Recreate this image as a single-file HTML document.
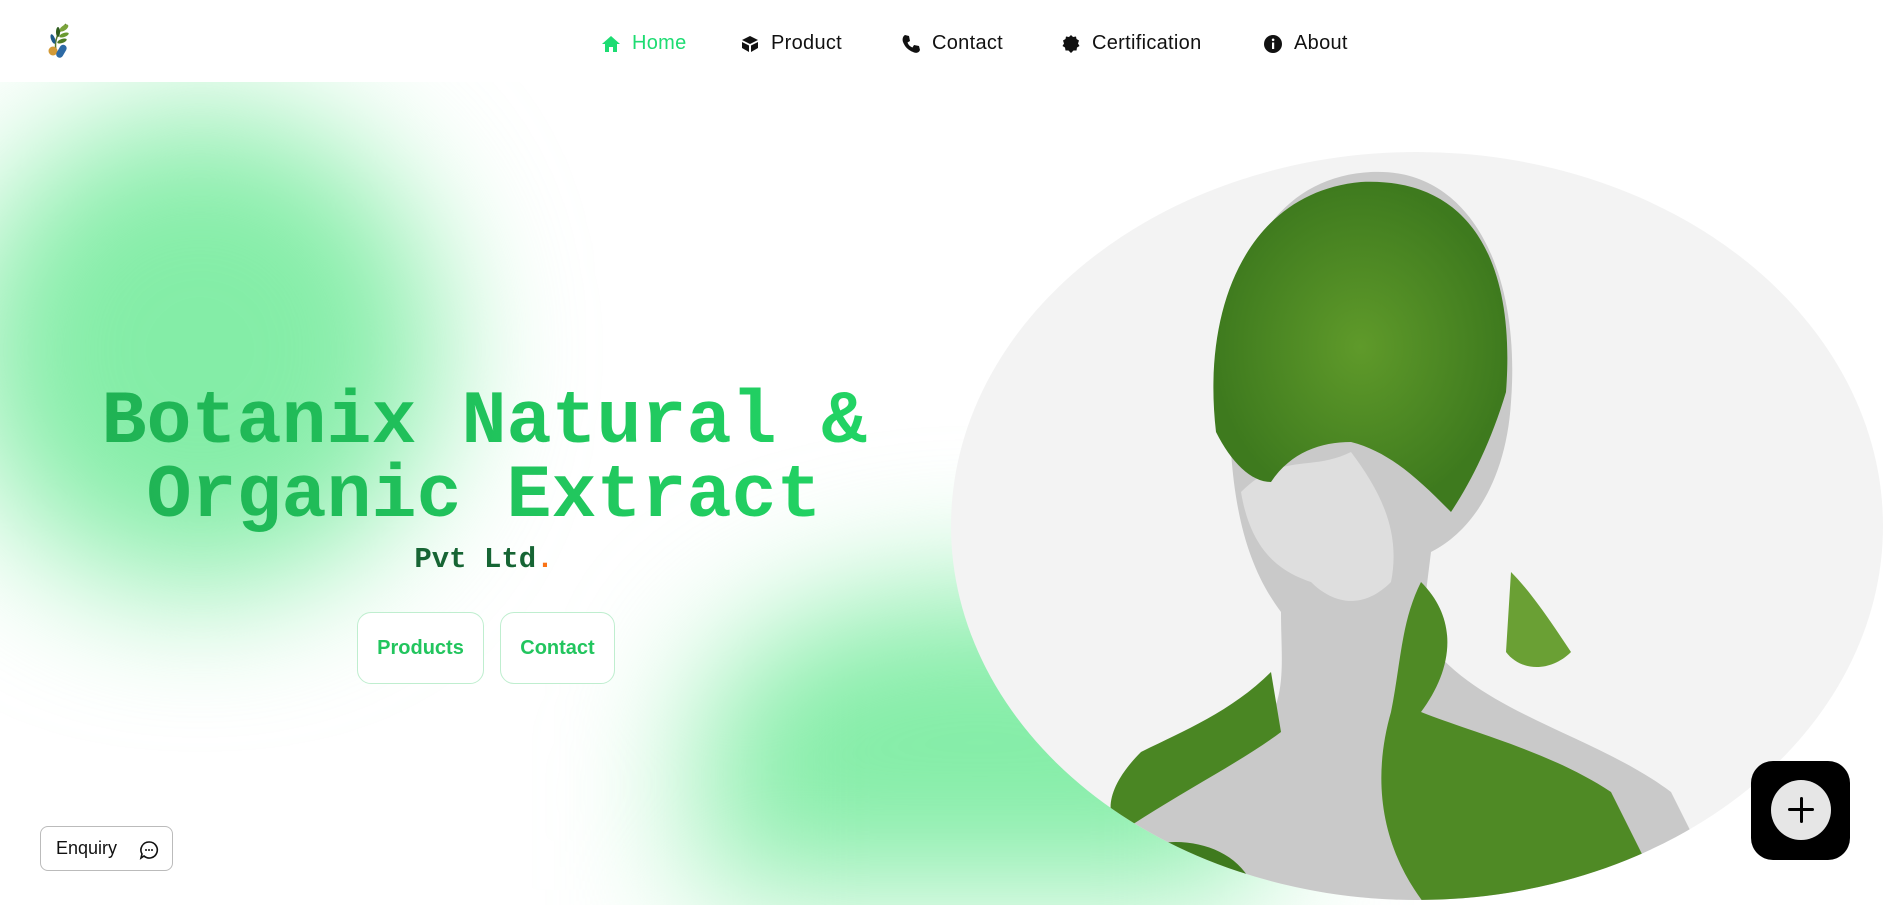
<!DOCTYPE html>
<html><head><meta charset="utf-8"><style>
*{margin:0;padding:0;box-sizing:border-box}
html,body{width:1897px;height:905px;overflow:hidden;background:#fff;font-family:"Liberation Sans",sans-serif}
.wrap{position:absolute;left:0;top:0;width:1897px;height:905px;overflow:hidden;contain:paint}
.nav{position:absolute;top:0;left:0;width:1897px;height:82px;background:#fff;z-index:5}
.ni{position:absolute;top:32px;font-size:20px;color:#111;display:flex;align-items:center;gap:11px;letter-spacing:.3px}
.ni svg{width:20px;height:20px}
.blob{position:absolute;border-radius:50%;background:#84eda7;filter:blur(70px)}
h1{position:absolute;left:0;width:968px;top:386px;text-align:center;font-family:"Liberation Mono",monospace;font-weight:bold;font-size:75px;line-height:74px;background:linear-gradient(90deg,#1fae52,#22d866);-webkit-background-clip:text;background-clip:text;color:transparent}
.pvt{position:absolute;left:0;width:968px;top:543px;text-align:center;font-family:"Liberation Mono",monospace;font-weight:bold;font-size:29px;color:#166534}
.btn{position:absolute;top:612px;height:72px;border:1.5px solid #bfeecf;border-radius:14px;background:#fff;color:#22c55e;font-weight:bold;font-size:20px;display:flex;align-items:center;justify-content:center}
</style></head><body><div class="wrap">
<div class="blob" style="left:-40px;top:110px;width:480px;height:480px"></div>
<div class="blob" style="left:700px;top:590px;width:560px;height:300px;border-radius:50% 50% 0 0"></div>
<div class="nav">
<svg style="position:absolute;left:44px;top:22px" width="32" height="40" viewBox="0 0 32 40">
<path d="M12 28 C10 18 14 10 22 2" stroke="#5a7a2a" stroke-width="1.5" fill="none"/>
<ellipse cx="20" cy="6" rx="5" ry="2.5" fill="#7aa33a" transform="rotate(-35 20 6)"/>
<ellipse cx="14" cy="10" rx="2" ry="5" fill="#2f5c1e"/>
<ellipse cx="20" cy="13" rx="5" ry="2" fill="#6a9a30" transform="rotate(-20 20 13)"/>
<ellipse cx="9" cy="17" rx="2" ry="5" fill="#1f5a8a" transform="rotate(-20 9 17)"/>
<ellipse cx="18" cy="19" rx="5" ry="2" fill="#4d7a24" transform="rotate(-20 18 19)"/>
<circle cx="9" cy="29" r="4.5" fill="#d39a36"/>
<rect x="14" y="22" width="7" height="14" rx="3.5" fill="#2d6aa5" transform="rotate(30 17 29)"/>
</svg>
<div class="ni" style="left:601px;color:#1ddc72"><svg viewBox="0 0 20 20"><path d="M10 2 L19 10 H16 V18 H12 V13 H8 V18 H4 V10 H1Z" fill="#1ddc72"/></svg>Home</div>
<div class="ni" style="left:740px"><svg viewBox="0 0 20 20"><path d="M10 2 L18 6 L10 10 L2 6Z M2 8 L9 11.5 V18 L2 14Z M18 8 L11 11.5 V18 L18 14Z" fill="#111"/></svg>Product</div>
<div class="ni" style="left:901px"><svg viewBox="0 0 20 20"><path d="M4 1 L8 2 L9 7 L6.5 8.5 C7.5 11 9 12.5 11.5 13.5 L13 11 L18 12 L19 16 C18 19 15 19.5 12 18 C7 16 4 13 2 8 C1 5 2 2 4 1Z" fill="#111"/></svg>Contact</div>
<div class="ni" style="left:1061px"><svg viewBox="0 0 20 20"><path d="M10 1 L12 3 L15 2.5 L15.5 5 L18 6.5 L17 9.5 L18.5 12 L16 13.5 L15.5 16.5 L12.5 16.5 L10 19 L7.5 16.5 L4.5 16.5 L4 13.5 L1.5 12 L3 9.5 L2 6.5 L4.5 5 L5 2.5 L8 3Z" fill="#111"/></svg>Certification</div>
<div class="ni" style="left:1263px"><svg viewBox="0 0 20 20"><circle cx="10" cy="10" r="9" fill="#111"/><rect x="9" y="8.5" width="2.2" height="6.5" fill="#fff"/><circle cx="10.1" cy="5.8" r="1.3" fill="#fff"/></svg>About</div>
</div>
<h1>Botanix Natural &amp;<br>Organic Extract</h1>
<div class="pvt">Pvt Ltd<span style="color:#f97316">.</span></div>
<div class="btn" style="left:357px;width:127px">Products</div>
<div class="btn" style="left:500px;width:115px">Contact</div>
<svg style="position:absolute;left:951px;top:152px" width="932" height="748" viewBox="0 0 932 748">
<defs><clipPath id="c"><ellipse cx="466" cy="374" rx="466" ry="374"/></clipPath>
<radialGradient id="g" cx=".5" cy=".5" r=".5"><stop offset="0" stop-color="#5f9a2a"/><stop offset="1" stop-color="#3e7a1e"/></radialGradient></defs>
<ellipse cx="466" cy="374" rx="466" ry="374" fill="#f3f3f3"/>
<g clip-path="url(#c)">
<path d="M280 300 C260 120 320 25 420 20 C520 15 570 120 560 250 C555 330 520 380 480 400 L470 480 C520 560 640 580 720 640 L780 760 L100 760 C130 650 220 620 290 600 C340 560 330 520 330 460 C300 420 285 370 280 300Z" fill="#c9c9c9"/>
<path d="M290 340 C330 300 360 320 400 300 C430 340 450 380 440 430 C410 460 380 450 360 430 C330 420 300 400 290 340Z" fill="#dedede"/>
<path d="M265 280 C250 150 300 40 410 30 C520 25 565 110 555 240 C540 290 520 330 500 360 C470 330 440 300 400 290 C370 290 340 300 320 330 C300 330 280 310 265 280Z" fill="url(#g)"/>
<path d="M470 430 C510 470 500 520 470 560 C520 580 600 600 660 640 L720 760 L480 760 C430 700 420 630 440 560 C450 510 450 470 470 430Z" fill="#4f8a25"/>
<path d="M320 520 C280 560 230 580 190 600 C160 630 150 660 170 680 C230 640 290 610 330 580Z" fill="#4a8623"/>
<path d="M180 700 C220 680 280 690 300 730 L300 760 L150 760Z" fill="#3f7a1e"/>
<path d="M560 420 C580 440 600 470 620 500 C600 520 570 520 555 500Z" fill="#6aa034"/>
</g>
</svg>
<div style="position:absolute;left:40px;top:826px;width:133px;height:45px;border:1.5px solid #bbb;border-radius:8px;background:#fff;display:flex;align-items:center;padding-left:15px;font-size:18px;color:#111">Enquiry
<svg style="position:absolute;left:98px;top:13px" width="20" height="20" viewBox="0 0 20 20"><path d="M10 2 A8 8 0 1 1 5 16 L2 18 L3 14 A8 8 0 0 1 10 2Z" fill="none" stroke="#111" stroke-width="1.6"/><circle cx="7" cy="10" r="1" fill="#111"/><circle cx="10" cy="10" r="1" fill="#111"/><circle cx="13" cy="10" r="1" fill="#111"/></svg></div>
<div style="position:absolute;left:1751px;top:761px;width:99px;height:99px;border-radius:22px;background:#000">
<div style="position:absolute;left:20px;top:19px;width:60px;height:60px;border-radius:50%;background:#e6e6e6"></div>
<div style="position:absolute;left:37px;top:47px;width:26px;height:3px;background:#000;border-radius:2px"></div>
<div style="position:absolute;left:48.5px;top:36px;width:3px;height:26px;background:#000;border-radius:2px"></div>
</div>
</div></body></html>
